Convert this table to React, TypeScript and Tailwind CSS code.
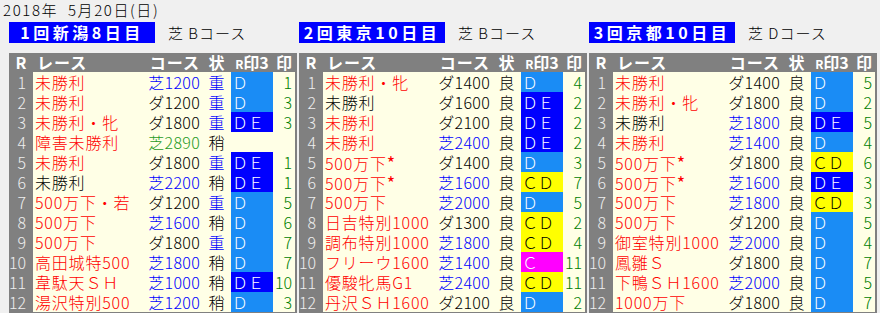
import React from "react";

type Mark = "" | "D" | "DE" | "CD" | "C";
type Row = {
  name: string;
  nameBlack?: boolean;
  course: string;
  state: string;
  mark: Mark;
  num: string;
};

type Venue = { title: string; sub: string; rows: Row[] };

const r = (
  name: string,
  course: string,
  state: string,
  mark: Mark,
  num: string,
  nameBlack = false
): Row => ({ name, course, state, mark, num, nameBlack });

const venues: Venue[] = [
  {
    title: "1回新潟8日目",
    sub: "芝 Bコース",
    rows: [
      r("未勝利", "芝1200", "重", "D", "1"),
      r("未勝利", "ダ1200", "重", "D", "3"),
      r("未勝利・牝", "ダ1800", "重", "DE", "3"),
      r("障害未勝利", "芝2890", "稍", "", ""),
      r("未勝利", "ダ1800", "重", "DE", "1"),
      r("未勝利", "芝2200", "稍", "DE", "1", true),
      r("500万下・若", "ダ1200", "重", "D", "5"),
      r("500万下", "芝1600", "稍", "D", "6"),
      r("500万下", "ダ1800", "重", "D", "7"),
      r("高田城特500", "芝1800", "稍", "D", "7"),
      r("韋駄天ＳＨ", "芝1000", "稍", "DE", "10"),
      r("湯沢特別500", "芝1200", "稍", "D", "3"),
    ],
  },
  {
    title: "2回東京10日目",
    sub: "芝 Bコース",
    rows: [
      r("未勝利・牝", "ダ1400", "良", "D", "4"),
      r("未勝利", "ダ1600", "良", "DE", "2", true),
      r("未勝利", "ダ2100", "良", "DE", "2"),
      r("未勝利", "芝2400", "良", "DE", "2"),
      r("500万下*", "ダ1400", "良", "D", "3"),
      r("500万下*", "芝1600", "良", "CD", "7"),
      r("500万下", "芝2000", "良", "D", "5"),
      r("日吉特別1000", "ダ1300", "良", "CD", "2"),
      r("調布特別1000", "芝1800", "良", "CD", "4"),
      r("フリーウ1600", "芝1400", "良", "C", "11"),
      r("優駿牝馬G1", "芝2400", "良", "CD", "11"),
      r("丹沢ＳＨ1600", "ダ2100", "良", "D", "2"),
    ],
  },
  {
    title: "3回京都10日目",
    sub: "芝 Dコース",
    rows: [
      r("未勝利", "ダ1400", "良", "D", "5"),
      r("未勝利・牝", "ダ1800", "良", "D", "2"),
      r("未勝利", "芝1800", "良", "DE", "5", true),
      r("未勝利", "芝1400", "良", "D", "4"),
      r("500万下*", "ダ1800", "良", "CD", "6"),
      r("500万下*", "芝1600", "良", "DE", "3"),
      r("500万下", "芝1800", "良", "CD", "3"),
      r("500万下", "ダ1200", "良", "D", "5"),
      r("御室特別1000", "芝2000", "良", "D", "4"),
      r("鳳雛Ｓ", "ダ1800", "良", "D", "7"),
      r("下鴨ＳＨ1600", "芝2000", "良", "D", "5"),
      r("1000万下", "ダ1800", "良", "D", "7"),
    ],
  },
];

const markStyle: Record<Mark, { cls: string; text: string }> = {
  "": { cls: "bg-[#ffffe6] text-black", text: "" },
  D: { cls: "bg-[#1a8cf5] text-white", text: "Ｄ" },
  DE: { cls: "bg-[#0000ff] text-white", text: "ＤＥ" },
  CD: { cls: "bg-[#ffff00] text-black", text: "ＣＤ" },
  C: { cls: "bg-[#ff00ff] text-white", text: "Ｃ" },
};

function courseColor(c: string, name: string) {
  if (name.startsWith("障害")) return "text-[#1f9a1f]";
  if (c.startsWith("芝")) return "text-[#0000ff]";
  return "text-black";
}

function RaceName({ name }: { name: string }) {
  if (name.endsWith("*")) {
    return (
      <>
        {name.slice(0, -1)}
        <span className="font-normal text-[18px]">*</span>
      </>
    );
  }
  return <>{name}</>;
}

function Table({ v }: { v: Venue }) {
  return (
    <div className="w-[288px] bg-[#808080] pr-[2px] pb-[1px]">
      <div className="flex h-[19px] items-center font-bold text-white text-[16px] leading-[19px]">
        <div className="w-[24px] text-center">R</div>
        <div className="w-[113px] pl-[4px] tracking-[1px]">レース</div>
        <div className="w-[56px] text-right pr-[2px] tracking-[1px]">コース</div>
        <div className="w-[29px] text-center">状</div>
        <div className="w-[42px] flex items-baseline justify-center">
          <span className="text-[12px]">R</span>
          <span>印3</span>
        </div>
        <div className="w-[22px] text-center">印</div>
      </div>
      {v.rows.map((row, i) => {
        const m = markStyle[row.mark];
        return (
          <div key={i} className="flex h-[20px] items-center text-[16px] leading-[20px] font-light">
            <div className="w-[24px] h-full flex items-center justify-end pr-[7px] text-[#eeeeee]">
              {i + 1}
            </div>
            <div className="flex flex-1 h-full items-center bg-[#ffffe6]">
              <div
                className={`w-[113px] pl-[2px] tracking-[0.8px] whitespace-nowrap ${
                  row.nameBlack ? "text-black" : "text-[#ff0000]"
                }`}
              >
                <RaceName name={row.name} />
              </div>
              <div
                className={`w-[56px] text-right pr-[2px] tracking-[0.3px] whitespace-nowrap ${courseColor(
                  row.course,
                  row.name
                )}`}
              >
                {row.course}
              </div>
              <div
                className={`w-[29px] text-center ${
                  row.state === "重" ? "text-[#0000ff]" : "text-black"
                }`}
              >
                {row.state}
              </div>
              <div className={`w-[42px] h-full flex items-center pl-[1px] ${m.cls}`}>
                {m.text}
              </div>
              <div className="w-[22px] text-right pr-[3px] text-[#008000]">{row.num}</div>
            </div>
          </div>
        );
      })}
    </div>
  );
}

export default function App() {
  return (
    <div
      className="w-[880px] h-[313px] overflow-hidden bg-[#f0f0f0] text-black"
      style={{ fontFamily: '"Noto Sans CJK JP", "Noto Sans", sans-serif' }}
    >
      <div className="pt-[1px] pl-[3px] text-[15px] leading-[17px] tracking-[1.6px] font-light whitespace-nowrap">
        2018年&nbsp;&nbsp;5月20日(日)
      </div>
      <div className="flex gap-[2px] pl-[9px] mt-[4px]">
        {venues.map((v, i) => (
          <div key={i} className="w-[288px] flex items-center">
            <div className="w-[146px] h-[21px] bg-[#0000ff] text-white font-bold text-[16px] leading-[21px] tracking-[3.5px] flex items-center justify-center">
              {v.title}
            </div>
            <div className="ml-[13px] text-[15px] leading-[21px] tracking-[1px] font-light">{v.sub}</div>
          </div>
        ))}
      </div>
      <div className="flex gap-[2px] pl-[9px] mt-[10px]">
        {venues.map((v, i) => (
          <Table key={i} v={v} />
        ))}
      </div>
    </div>
  );
}
